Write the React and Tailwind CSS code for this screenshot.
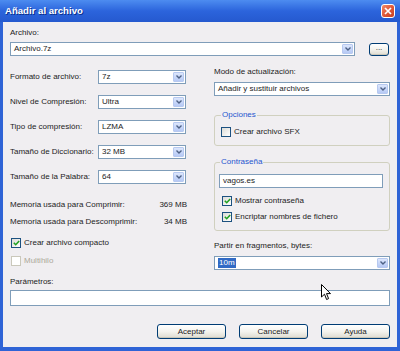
import React from 'react';

const font = { fontFamily: '"Liberation Sans", Arial, sans-serif' };

function Arrow() {
  return (
    <div className="flex h-full w-[11px] items-center justify-center rounded-[1px] border border-[#b7c9f0] bg-gradient-to-b from-[#dce6fc] to-[#b6c9f5]">
      <svg width="6" height="4" viewBox="0 0 6 4">
        <path d="M0.5 0.5 L3 3 L5.5 0.5" fill="none" stroke="#4d6185" strokeWidth="1.4" />
      </svg>
    </div>
  );
}

function Combo({ value, className = '', selected = false }) {
  return (
    <div className={`flex h-[14px] items-stretch border border-[#7f9db9] bg-white p-[1px] ${className}`}>
      <div className="flex flex-1 items-center pl-[2px]">
        {selected ? (
          <span className="flex h-full items-center bg-[#316ac5] px-[1px] text-white">{value}</span>
        ) : (
          <span>{value}</span>
        )}
      </div>
      <Arrow />
    </div>
  );
}

function Check({ checked = false, disabled = false, label }) {
  return (
    <div className={`flex h-[10px] items-center gap-[3px] ${disabled ? 'text-[#aca899]' : ''}`}>
      <div
        className={`flex h-[10px] w-[10px] items-center justify-center border ${
          disabled ? 'border-[#cac8bb] bg-white' : 'border-[#1c5180] bg-gradient-to-br from-[#dcdcd7] to-white'
        }`}
      >
        {checked && (
          <svg width="7" height="6" viewBox="0 0 7 6">
            <path d="M0.8 2.8 L2.7 4.7 L6.2 1" fill="none" stroke="#21a121" strokeWidth="1.6" />
          </svg>
        )}
      </div>
      <span className="leading-[10px]">{label}</span>
    </div>
  );
}

function Button({ children, className = '' }) {
  return (
    <div
      className={`flex items-center justify-center rounded-[3px] border border-[#003c74] bg-gradient-to-b from-white via-[#f4f3ee] to-[#dedbd0] shadow-[inset_0_-1px_0_#c9c6b9] ${className}`}
    >
      {children}
    </div>
  );
}

function Row({ label, value }) {
  return (
    <div className="flex h-[14px] items-center">
      <span className="w-[88px] leading-[10px]">{label}</span>
      <Combo value={value} className="w-[88px]" />
    </div>
  );
}

export default function App() {
  return (
    <div className="relative flex h-[351px] w-[400px] flex-col bg-[#2f63d6] text-[8px] text-[#1c1c1c]" style={font}>
      <div className="flex h-[22px] items-center justify-between bg-gradient-to-b from-[#4d8cf0] via-[#2c64dc] to-[#2559cf] pl-[5px] pr-[5px]">
        <span className="text-[9.6px] font-bold text-white [text-shadow:1px_1px_0_#0b2f8a]">Añadir al archivo</span>
        <div className="flex h-[14px] w-[14px] items-center justify-center rounded-[3px] border border-white bg-gradient-to-br from-[#f08a68] via-[#e0583a] to-[#c8401f]">
          <svg width="8" height="8" viewBox="0 0 8 8">
            <path d="M1 1 L7 7 M7 1 L1 7" stroke="white" strokeWidth="1.7" />
          </svg>
        </div>
      </div>

      <div className="mx-[3px] mb-[4px] flex flex-1 flex-col bg-[#f0eef1] pl-[7px] pr-[6px] pt-[6px]">
        <span className="leading-[10px]">Archivo:</span>
        <div className="mt-[4px] flex items-center">
          <Combo value="Archivo.7z" className="w-[345px]" />
          <Button className="ml-[14px] h-[13px] w-[20px] pb-[3px]">...</Button>
        </div>

        <div className="flex gap-[27px]">
          <div className="flex w-[177px] flex-col">
            <div className="mt-[14px] flex flex-col gap-[11px]">
              <Row label="Formato de archivo:" value="7z" />
              <Row label="Nivel de Compresión:" value="Ultra" />
              <Row label="Tipo de compresión:" value="LZMA" />
              <Row label="Tamaño de Diccionario:" value="32 MB" />
              <Row label="Tamaño de la Palabra:" value="64" />
            </div>
            <div className="mt-[16px] flex flex-col gap-[7px] leading-[10px]">
              <div className="flex justify-between">
                <span>Memoria usada para Comprimir:</span>
                <span>369 MB</span>
              </div>
              <div className="flex justify-between">
                <span>Memoria usada para Descomprimir:</span>
                <span>34 MB</span>
              </div>
            </div>
            <div className="ml-[1px] mt-[11px] flex flex-col gap-[8px]">
              <Check checked label="Crear archivo compacto" />
              <Check disabled label="Multihilo" />
            </div>
          </div>

          <div className="flex w-[176px] flex-col">
            <span className="mt-[11px] leading-[10px]">Modo de actualización:</span>
            <Combo value="Añadir y sustituir archivos" className="mt-[5px]" />

            <fieldset className="mt-[14px] rounded-[3px] border border-[#d0d0bf] px-[6px] pb-[8px]">
              <legend className="px-[1px] leading-[10px] text-[#1f55cf]">Opciones</legend>
              <div className="mt-[7px]">
                <Check label="Crear archivo SFX" />
              </div>
            </fieldset>

            <fieldset className="mt-[11px] rounded-[3px] border border-[#d0d0bf] pl-[4px] pr-[6px] pb-[8px]">
              <legend className="ml-[1px] px-[1px] leading-[10px] text-[#1f55cf]">Contraseña</legend>
              <div className="mt-[7px] flex h-[14px] items-center border border-[#7f9db9] bg-white pl-[3px]">vagos.es</div>
              <div className="ml-[3px] mt-[8px] flex flex-col gap-[6px]">
                <Check checked label="Mostrar contraseña" />
                <Check checked label="Encriptar nombres de fichero" />
              </div>
            </fieldset>

            <span className="mt-[10px] leading-[10px]">Partir en fragmentos, bytes:</span>
            <Combo value="10m" selected className="mt-[5px]" />
          </div>
        </div>

        <span className="mt-[7px] leading-[10px]">Parámetros:</span>
        <div className="mt-[3px] h-[16px] w-[380px] border border-[#7f9db9] bg-white" />

        <div className="mt-[18px] flex justify-end gap-[13px] pr-[1px]">
          <Button className="h-[15px] w-[69px]">Aceptar</Button>
          <Button className="h-[15px] w-[69px]">Cancelar</Button>
          <Button className="h-[15px] w-[69px]">Ayuda</Button>
        </div>
      </div>

      <svg className="absolute left-[321px] top-[284px]" width="11" height="17" viewBox="0 0 11 17">
        <path d="M0.5 0.5 L0.5 13 L3.5 10.2 L5.6 15.5 L7.6 14.6 L5.5 9.6 L9.5 9.6 Z" fill="white" stroke="black" strokeWidth="1" strokeLinejoin="round" />
      </svg>
    </div>
  );
}
